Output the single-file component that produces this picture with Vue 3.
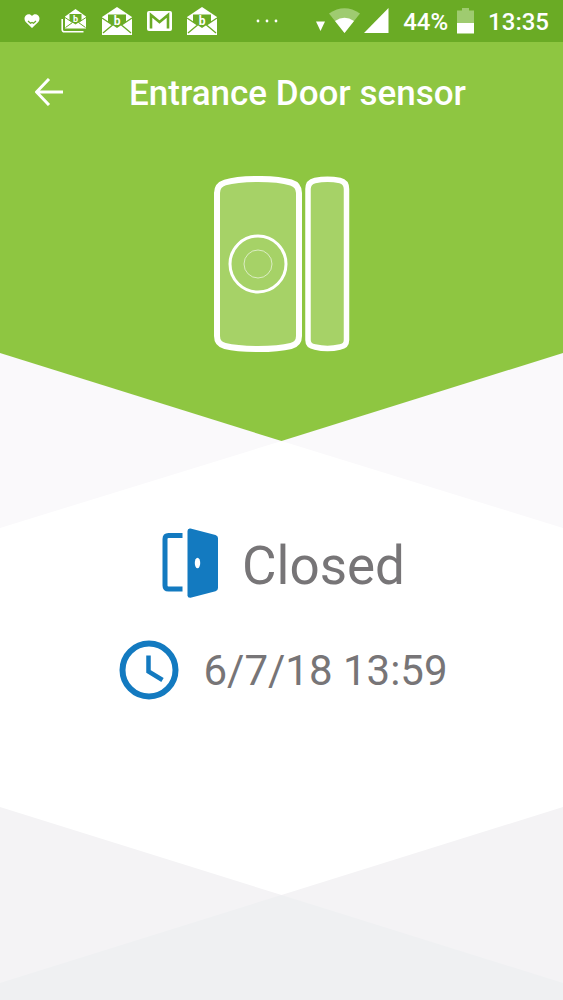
<script setup>
const sensor = {
  name: 'Entrance Door sensor',
  state: 'Closed',
  changedAt: '6/7/18 13:59',
}
</script>

<template>
  <div class="screen">
    <header class="status-bar">
      <div class="notifications">
        <svg class="heart" width="16" height="14" viewBox="0 0 16 14" aria-hidden="true">
          <path d="M8 14 1.5 7.7C.1 6 .2 3 1.8 1.5 3.7-.2 6.5 0 8 2 9.5 0 12.3-.2 14.2 1.5 15.8 3 15.9 6 14.5 7.7Z" fill="#fff" />
          <path d="M4 7 6.5 9.3 8 8.5 9.5 9.3 12 7" fill="none" stroke="#6aab25" stroke-width="1.2" />
        </svg>
        <svg class="mail-stack" width="26" height="24" viewBox="0 0 26 24" aria-hidden="true">
          <path d="M1.2 10V20.5Q1.2 22.8 3.5 22.8H22.5" fill="none" stroke="#fff" stroke-width="1.6" />
          <path d="M4 7.5 14.5 0 25 7.5V19.5H4Z" fill="#fff" />
          <path d="M8.5 5H20.5V11.5L14.5 15.5 8.5 11.5Z" fill="#6aab25" />
          <path d="M4 8.5 11.5 13.5 4.5 18.5M25 8.5 17.5 13.5 24.5 18.5" fill="none" stroke="#6aab25" stroke-width="1" />
          <text x="14.5" y="12.5" text-anchor="middle" class="mark small">b</text>
        </svg>
        <svg class="mail" width="30" height="28" viewBox="0 0 30 28" aria-hidden="true">
          <path d="M0 10 15 0 30 10V28H0Z" fill="#fff" />
          <path d="M6 7.5H24V15L15 21 6 15Z" fill="#6aab25" />
          <path d="M0 11 10.5 18 1 26M30 11 19.5 18 29 26" fill="none" stroke="#6aab25" stroke-width="1.3" />
          <text x="15" y="17.5" text-anchor="middle" class="mark">b</text>
        </svg>
        <svg class="gmail" width="25" height="20" viewBox="0 0 25 20" aria-hidden="true">
          <rect width="25" height="20" rx="2" fill="#fff" />
          <path d="M4 17.5V4L12.5 11 21 4V17.5" fill="none" stroke="#6aab25" stroke-width="2.6" />
        </svg>
        <svg class="mail" width="30" height="28" viewBox="0 0 30 28" aria-hidden="true">
          <path d="M0 10 15 0 30 10V28H0Z" fill="#fff" />
          <path d="M6 7.5H24V15L15 21 6 15Z" fill="#6aab25" />
          <path d="M0 11 10.5 18 1 26M30 11 19.5 18 29 26" fill="none" stroke="#6aab25" stroke-width="1.3" />
          <text x="15" y="17.5" text-anchor="middle" class="mark">b</text>
        </svg>
      </div>
      <svg class="more" width="22" height="4" viewBox="0 0 22 4" aria-hidden="true">
        <g fill="#fff"><circle cx="2" cy="2" r="1.4" /><circle cx="11" cy="2" r="1.4" /><circle cx="20" cy="2" r="1.4" /></g>
      </svg>
      <div class="system">
        <svg width="73" height="26" viewBox="0 0 73 26" aria-hidden="true">
          <path d="M0 13.5H9L4.5 23Z" fill="#fff" />
          <path d="M13 5.5Q28.5-5 44 5.5L28.5 25Z" fill="#9fcb70" />
          <path d="M19 13Q28.5 6.5 38 13L28.5 25Z" fill="#fff" />
          <path d="M72.5 0V25H48Z" fill="#fff" />
        </svg>
        <span>44%</span>
        <svg class="battery" width="17" height="26" viewBox="0 0 17 26" aria-hidden="true">
          <path d="M5 0H12V2.5H17V15H0V2.5H5Z" fill="#9fcb70" />
          <path d="M0 15H17V25.5H0Z" fill="#fff" />
        </svg>
        <time>13:35</time>
      </div>
    </header>

    <section class="hero">
      <div class="title-bar">
        <button type="button" class="back" aria-label="Back">
          <svg width="28" height="28" viewBox="0 0 28 28" aria-hidden="true">
            <path d="M14 1 1.5 14 14 27M1.5 14H28" fill="none" stroke="#fff" stroke-width="3" />
          </svg>
        </button>
        <h1>{{ sensor.name }}</h1>
      </div>
      <svg class="device" width="137" height="177" viewBox="0 0 137 177" aria-hidden="true">
        <g fill="#a6d267" stroke="#fff">
          <path stroke-width="6" d="M4 17Q4 9 12 6.5C28 1.8 62 1.8 78 6.5Q86 9 86 17V160Q86 168 78 170C62 174 28 174 12 170Q4 168 4 160Z" />
          <path stroke-width="5.5" d="M95 13Q95 6 102 4.5Q114.5 2.2 127 4.5Q133.5 6 133.5 13V164Q133.5 170 127 171Q114.5 174 102 171Q95 170 95 164Z" />
          <circle stroke-width="3" cx="45" cy="88" r="28" />
          <circle stroke-width="1" stroke-opacity=".6" cx="45" cy="88" r="14" />
        </g>
      </svg>
    </section>

    <main class="details">
      <svg class="backdrop" viewBox="0 0 563 647" preserveAspectRatio="none" aria-hidden="true">
        <path d="M0 0H563V300H0Z" fill="#faf9fb" />
        <path d="M0 300H563V647H0Z" fill="#f4f3f5" />
        <path d="M281.5 88 563 175V454L281.5 542 0 454V175Z" fill="#fff" />
        <path d="M281.5 542 563 630V647H0V630Z" fill="#eff0f2" />
      </svg>
      <p class="row state">
        <svg width="56" height="70" viewBox="0 0 56 70" aria-hidden="true">
          <path d="M20.5 7.5H6.5Q3 7.5 3 11V57.5Q3 61 6.5 61H20.5" fill="none" stroke="#137ac0" stroke-width="5" />
          <path d="M28.5.5 53.5 7Q56 7.8 56 10V60Q56 62.5 53.5 63.2L28.5 69.8Q25.5 70 25.5 67.5V3Q25.5 0 28.5.5Z" fill="#137ac0" />
          <ellipse cx="35.5" cy="35" rx="2.7" ry="5.2" fill="#fff" />
        </svg>
        <span>{{ sensor.state }}</span>
      </p>
      <p class="row changed">
        <svg width="60" height="60" viewBox="0 0 60 60" aria-hidden="true">
          <circle cx="30" cy="30" r="26.5" fill="none" stroke="#137ac0" stroke-width="6" />
          <path d="M29.5 15.5V31.5L43.5 40" fill="none" stroke="#137ac0" stroke-width="4.5" />
        </svg>
        <time>{{ sensor.changedAt }}</time>
      </p>
    </main>
  </div>
</template>

<style>
body {
  margin: 0;
}
</style>

<style scoped>
.screen {
  min-height: 100vh;
  display: flex;
  flex-direction: column;
  font-family: Roboto, "Liberation Sans", sans-serif;
  background: #f4f3f5;
}

.status-bar {
  height: 42px;
  box-sizing: border-box;
  padding: 0 14px 0 24px;
  display: flex;
  align-items: center;
  justify-content: space-between;
  background: #6aab25;
  color: #fff;
  font-size: 24px;
  line-height: 32px;
  font-weight: 500;
}

.notifications {
  display: flex;
  align-items: center;
  gap: 15px;
}

.heart {
  margin-right: 6px;
}

.mark {
  font: bold 12px Roboto, sans-serif;
  fill: #fff;
}

.mark.small {
  font-size: 9px;
}

.system {
  display: flex;
  align-items: center;
  gap: 14px;
  padding-top: 2px;
}

.system svg {
  margin-bottom: 2px;
}

.system .battery {
  margin-left: -5px;
}

.hero {
  z-index: 1;
  display: flex;
  flex-direction: column;
  align-items: center;
  padding-bottom: 88px;
  background: #8ec641;
  clip-path: polygon(0 0, 100% 0, 100% calc(100% - 88px), 50% 100%, 0 calc(100% - 88px));
}

.title-bar {
  width: 100%;
  height: 100px;
  box-sizing: border-box;
  padding: 0 35px;
  display: grid;
  grid-template-columns: 28px 1fr;
  align-items: center;
}

.back {
  display: flex;
  padding: 0;
  border: 0;
  background: none;
  cursor: pointer;
}

h1 {
  margin: 0;
  padding: 4px 0 0 4px;
  text-align: center;
  color: #fff;
  font-size: 35px;
  line-height: 40px;
  font-weight: 500;
}

.device {
  margin-top: 34px;
}

.details {
  position: relative;
  flex: 1;
  margin-top: -88px;
  padding: 175px 0 0 4px;
  display: flex;
  flex-direction: column;
  align-items: center;
  gap: 36px;
}

.backdrop {
  position: absolute;
  inset: 0;
  width: 100%;
  height: 100%;
}

.row {
  position: relative;
  margin: 0;
  display: flex;
  align-items: flex-start;
  gap: 24px;
  color: #777577;
}

.row.state {
  font-size: 53px;
  line-height: 76px;
}

.row.changed {
  font-size: 42px;
  line-height: 62px;
}
</style>
